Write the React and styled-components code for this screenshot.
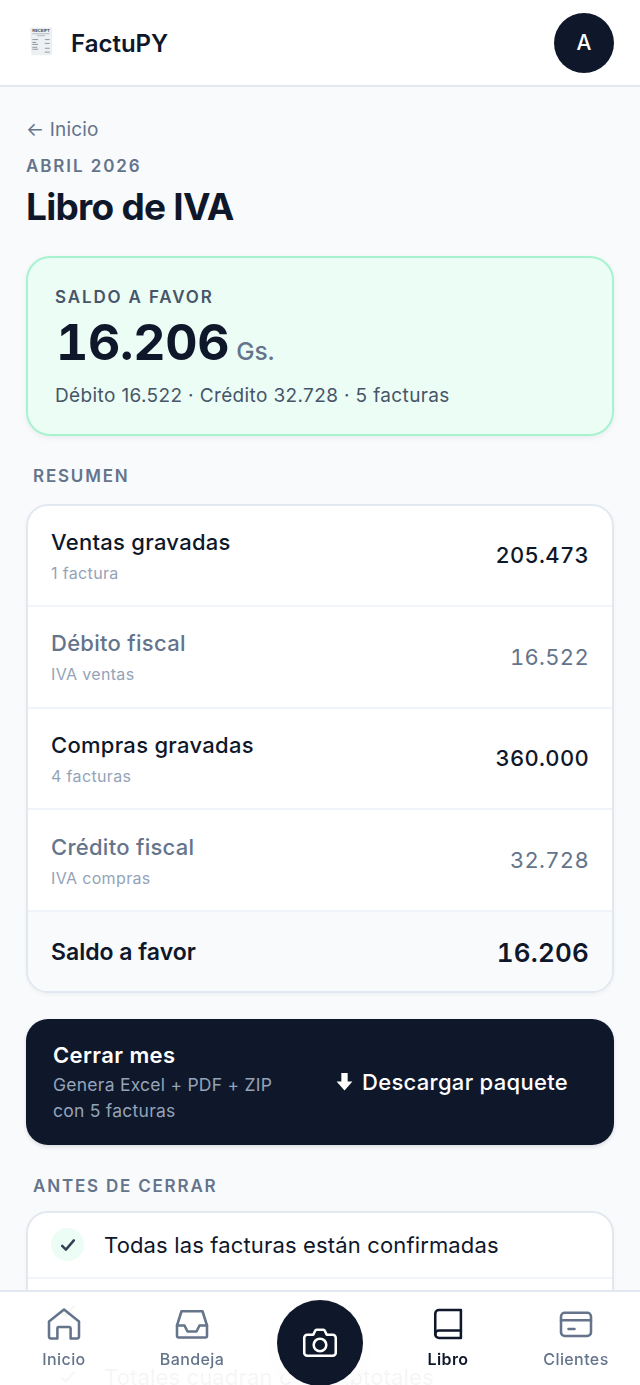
import styled, { createGlobalStyle } from "styled-components"

const GlobalStyle = createGlobalStyle`
    * { box-sizing: border-box; }
    html, body {
        margin: 0;
        height: 100%;
        overflow: hidden;
        background: #f8fafc;
        font-family: 'Inter', 'Liberation Sans', sans-serif;
        font-optical-sizing: none;
        color: #0f172a;
    }
`

const summary = [
    { title: "Ventas gravadas", sub: "1 factura", value: "205.473" },
    { title: "Débito fiscal", sub: "IVA ventas", value: "16.522", muted: true },
    { title: "Compras gravadas", sub: "4 facturas", value: "360.000" },
    { title: "Crédito fiscal", sub: "IVA compras", value: "32.728", muted: true },
]

const ReceiptLogo = () => (
    <LogoSvg viewBox="0 0 24 30">
        <path d="M1 1h22v27l-2.500 1-2-1-2 1-2-1-2.500 1-2-1-2 1-2-1-2.500 1-1-1z" fill="#eef1f3" stroke="#dde3e7" strokeWidth=".5" />
        <text x="12" y="5.500" fontSize="4.200" fontWeight="700" textAnchor="middle" fill="#3c4650" fontFamily="'Liberation Sans', sans-serif">RECEIPT</text>
        <path d="M3 7h18M8 9h8" stroke="#a2abb3" strokeWidth=".8" />
        <path d="M3 13h6M16 13h5M3 16h4M3 18h6M16 17h5M3 21h5M3 23h6M16 22h5M16 26h5" stroke="#8d97a0" strokeWidth="1" />
    </LogoSvg>
)

const Icon = ({ children, size = 36 }) => (
    <NavSvg viewBox="0 0 24 24" width={size} height={size}>
        {children}
    </NavSvg>
)

const Check = () => (
    <CheckBadge>
        <svg viewBox="0 0 24 24" width="20" height="20" fill="none" stroke="#334155" strokeWidth="3" strokeLinecap="round" strokeLinejoin="round">
            <path d="M5 13l4.500 4.500L19 6.500" />
        </svg>
    </CheckBadge>
)

export default function App() {
    return (
        <>
            <GlobalStyle />
            <Header>
                <Brand>
                    <ReceiptLogo />
                    <BrandName>FactuPY</BrandName>
                </Brand>
                <Avatar>A</Avatar>
            </Header>

            <Main>
                <BackLink href="#">← Inicio</BackLink>
                <Period>ABRIL 2026</Period>
                <Title>Libro de IVA</Title>

                <Hero>
                    <HeroLabel>SALDO A FAVOR</HeroLabel>
                    <HeroAmount>
                        16.206<HeroUnit>Gs.</HeroUnit>
                    </HeroAmount>
                    <HeroSub>Débito 16.522 · Crédito 32.728 · 5 facturas</HeroSub>
                </Hero>

                <SectionLabel>RESUMEN</SectionLabel>
                <Card>
                    {summary.map((row) => (
                        <Row key={row.title}>
                            <div>
                                <RowTitle $muted={row.muted}>{row.title}</RowTitle>
                                <RowSub>{row.sub}</RowSub>
                            </div>
                            <RowValue $muted={row.muted}>{row.value}</RowValue>
                        </Row>
                    ))}
                    <TotalRow>
                        <TotalTitle>Saldo a favor</TotalTitle>
                        <TotalValue>16.206</TotalValue>
                    </TotalRow>
                </Card>

                <CloseCard>
                    <div>
                        <CloseTitle>Cerrar mes</CloseTitle>
                        <CloseSub>
                            Genera Excel + PDF + ZIP
                            <br />
                            con 5 facturas
                        </CloseSub>
                    </div>
                    <DownloadButton>
                        <svg viewBox="0 0 16 18" width="17" height="19" fill="#fff">
                            <path d="M5 1h6v8h4.500L8 17.500.5 9H5z" />
                        </svg>
                        Descargar paquete
                    </DownloadButton>
                </CloseCard>

                <ChecksLabel>ANTES DE CERRAR</ChecksLabel>
                <Card>
                    <CheckRow>
                        <Check />
                        <CheckText>Todas las facturas están confirmadas</CheckText>
                    </CheckRow>
                    <CheckRow>
                        <Check />
                    </CheckRow>
                    <CheckRow>
                        <Check />
                        <CheckText>Totales cuadran con subtotales</CheckText>
                    </CheckRow>
                </Card>
            </Main>

            <BottomNav>
                <NavItem>
                    <Icon>
                        <path d="M12 2.400 2 10.400v10a1.200 1.200 0 0 0 1.200 1.200H7.600V15a1 1 0 0 1 1-1h6.800a1 1 0 0 1 1 1v6.600h4.400a1.200 1.200 0 0 0 1.200-1.200v-10z" />
                    </Icon>
                    Inicio
                </NavItem>
                <NavItem>
                    <Icon>
                        <path d="M5 3.500h14l3 9.500v7a1 1 0 0 1-1 1H3a1 1 0 0 1-1-1v-7z" />
                        <path d="M2 13h5l2 4h6l2-4h5" />
                    </Icon>
                    Bandeja
                </NavItem>
                <CameraCell>
                    <CameraButton>
                        <Icon>
                            <path d="M3.500 6.500h4l1.300-2.700a1 1 0 0 1 .9-.6h4.600a1 1 0 0 1 .9.6l1.300 2.700h4a2 2 0 0 1 2 2v10a2 2 0 0 1-2 2h-17a2 2 0 0 1-2-2v-10a2 2 0 0 1 2-2z" />
                            <circle cx="12" cy="13.300" r="4.200" />
                        </Icon>
                    </CameraButton>
                </CameraCell>
                <NavItem $active>
                    <Icon>
                        <path d="M6 2.700h14.600v18.600H6a2.500 2.500 0 0 1-2.500-2.500V5.200A2.500 2.500 0 0 1 6 2.700z" />
                        <path d="M3.500 18.800A2.500 2.500 0 0 1 6 16.300h14.600" />
                    </Icon>
                    Libro
                </NavItem>
                <NavItem>
                    <Icon>
                        <rect x="2" y="4.500" width="20" height="15.500" rx="2.500" />
                        <path d="M2 9.500h20M7 15.300h4" />
                    </Icon>
                    Clientes
                </NavItem>
            </BottomNav>
        </>
    )
}

const Header = styled.header`
    height: 87px;
    display: flex;
    align-items: center;
    justify-content: space-between;
    padding: 0 26px 0 29px;
    background: #fff;
    border-bottom: 2px solid #e2e8f0;
`

const Brand = styled.div`
    display: flex;
    align-items: center;
    gap: 18px;
`

const LogoSvg = styled.svg`
    width: 24px;
    height: 29px;
    margin-top: -3px;
`

const BrandName = styled.span`
    margin-top: 2px;
    font-size: 24px;
    font-weight: 600;
`

const Avatar = styled.div`
    width: 60px;
    height: 60px;
    border-radius: 50%;
    background: #0f172a;
    color: #fff;
    font-size: 21px;
    font-weight: 500;
    display: flex;
    align-items: center;
    justify-content: center;
`

const Main = styled.main`
    padding: 29px 26px 0;
`

const BackLink = styled.a`
    display: block;
    font-size: 19px;
    line-height: 28px;
    letter-spacing: 0.15px;
    color: #64748b;
    text-decoration: none;
`

const Period = styled.div`
    margin-top: 11px;
    font-size: 17px;
    line-height: 22px;
    font-weight: 600;
    letter-spacing: 1.9px;
    color: #64748b;
`

const Title = styled.h1`
    margin: 7px 0 0;
    font-size: 37px;
    line-height: 46px;
    font-weight: 700;
    letter-spacing: -0.75px;
`

const Hero = styled.section`
    margin-top: 26px;
    height: 180px;
    padding: 28px 27px 0;
    background: #ecfdf5;
    border: 2px solid #a7f3d0;
    border-radius: 24px;
    box-shadow: 0 2px 6px rgba(15, 23, 42, 0.06);
`

const HeroLabel = styled.div`
    font-size: 17px;
    line-height: 22px;
    font-weight: 600;
    letter-spacing: 1.85px;
    color: #475569;
`

const HeroAmount = styled.div`
    margin-top: 5px;
    padding-left: 1px;
    display: flex;
    align-items: baseline;
    gap: 7px;
    font-size: 50px;
    line-height: 58px;
    font-weight: 700;
    letter-spacing: -0.3px;
    font-variant-numeric: tabular-nums;
`

const HeroUnit = styled.span`
    font-size: 24.500px;
    font-weight: 500;
    letter-spacing: 0;
    color: #64748b;
`

const HeroSub = styled.div`
    margin-top: 2px;
    font-size: 19px;
    line-height: 28px;
    letter-spacing: 0.37px;
    color: #475569;
`

const SectionLabel = styled.div`
    margin: 28px 0 0 7px;
    font-size: 17px;
    line-height: 24px;
    font-weight: 600;
    letter-spacing: 1.8px;
    color: #64748b;
`

const ChecksLabel = styled(SectionLabel)`
    margin-top: 29px;
    margin-bottom: -2.500px;
`

const Card = styled.section`
    margin-top: 15.500px;
    background: #fff;
    border: 2px solid #e2e8f0;
    border-radius: 22px;
    overflow: hidden;
    box-shadow: 0 2px 4px rgba(15, 23, 42, 0.04);
`

const Row = styled.div`
    height: 101.600px;
    padding: 0 23px;
    display: flex;
    align-items: center;
    justify-content: space-between;
    border-bottom: 2px solid #f1f5f9;
`

const RowTitle = styled.div`
    font-size: 22px;
    line-height: 30px;
    font-weight: 500;
    letter-spacing: 0.28px;
    color: ${({ $muted }) => ($muted ? "#64748b" : "#0f172a")};
`

const RowSub = styled.div`
    margin-top: 5px;
    font-size: 16px;
    line-height: 22px;
    letter-spacing: 0.35px;
    color: #94a3b8;
`

const RowValue = styled.div`
    font-size: 22px;
    font-weight: ${({ $muted }) => ($muted ? 400 : 500)};
    letter-spacing: 0.3px;
    font-variant-numeric: tabular-nums;
    color: ${({ $muted }) => ($muted ? "#64748b" : "#0f172a")};
`

const TotalRow = styled.div`
    height: 79px;
    padding: 2px 23px 0;
    display: flex;
    align-items: center;
    justify-content: space-between;
    background: #f8fafc;
`

const TotalTitle = styled.div`
    font-size: 23px;
    font-weight: 600;
`

const TotalValue = styled.div`
    font-size: 26px;
    font-weight: 600;
    letter-spacing: 0.2px;
    font-variant-numeric: tabular-nums;
`

const CloseCard = styled.section`
    margin-top: 26px;
    height: 126px;
    padding: 0 46px 0 27px;
    display: flex;
    align-items: center;
    justify-content: space-between;
    background: #0f172a;
    border-radius: 22px;
    box-shadow: 0 2px 4px rgba(15, 23, 42, 0.12);
`

const CloseTitle = styled.div`
    font-size: 22px;
    line-height: 30px;
    font-weight: 600;
    letter-spacing: 0.4px;
    color: #fff;
`

const CloseSub = styled.div`
    margin-top: 2px;
    font-size: 17.500px;
    line-height: 26px;
    letter-spacing: 0.25px;
    color: #94a3b8;
`

const DownloadButton = styled.div`
    display: flex;
    align-items: center;
    gap: 9px;
    font-size: 22px;
    font-weight: 500;
    letter-spacing: 0.3px;
    color: #fff;
`

const CheckRow = styled.div`
    height: 66px;
    padding: 0 23px;
    display: flex;
    align-items: center;
    gap: 20px;
    border-bottom: 2px solid #f1f5f9;
`

const CheckBadge = styled.span`
    width: 33px;
    height: 33px;
    flex: none;
    border-radius: 50%;
    background: #ecfdf5;
    display: flex;
    align-items: center;
    justify-content: center;
`

const CheckText = styled.span`
    font-size: 22px;
    letter-spacing: 0.15px;
`

const BottomNav = styled.nav`
    position: fixed;
    left: 0;
    right: 0;
    bottom: 0;
    height: 95px;
    display: grid;
    grid-template-columns: repeat(5, 1fr);
    border-top: 2px solid #e2e8f0;
    background: rgba(255, 255, 255, 0.96);
`

const NavItem = styled.div`
    padding-top: 14px;
    display: flex;
    flex-direction: column;
    align-items: center;
    gap: 6px;
    font-size: 16px;
    line-height: 22px;
    font-weight: ${({ $active }) => ($active ? 600 : 500)};
    letter-spacing: 0.4px;
    color: ${({ $active }) => ($active ? "#0f172a" : "#64748b")};
`

const NavSvg = styled.svg`
    fill: none;
    stroke: currentColor;
    stroke-width: 1.700;
    stroke-linecap: round;
    stroke-linejoin: round;
`

const CameraCell = styled.div`
    display: flex;
    justify-content: center;
    padding-top: 8px;
`

const CameraButton = styled.div`
    width: 86px;
    height: 86px;
    border-radius: 50%;
    background: #0f172a;
    color: #fff;
    display: flex;
    align-items: center;
    justify-content: center;
    box-shadow: 0 0 0 6px rgba(255, 255, 255, 0.8), 0 4px 14px rgba(15, 23, 42, 0.05);
`
